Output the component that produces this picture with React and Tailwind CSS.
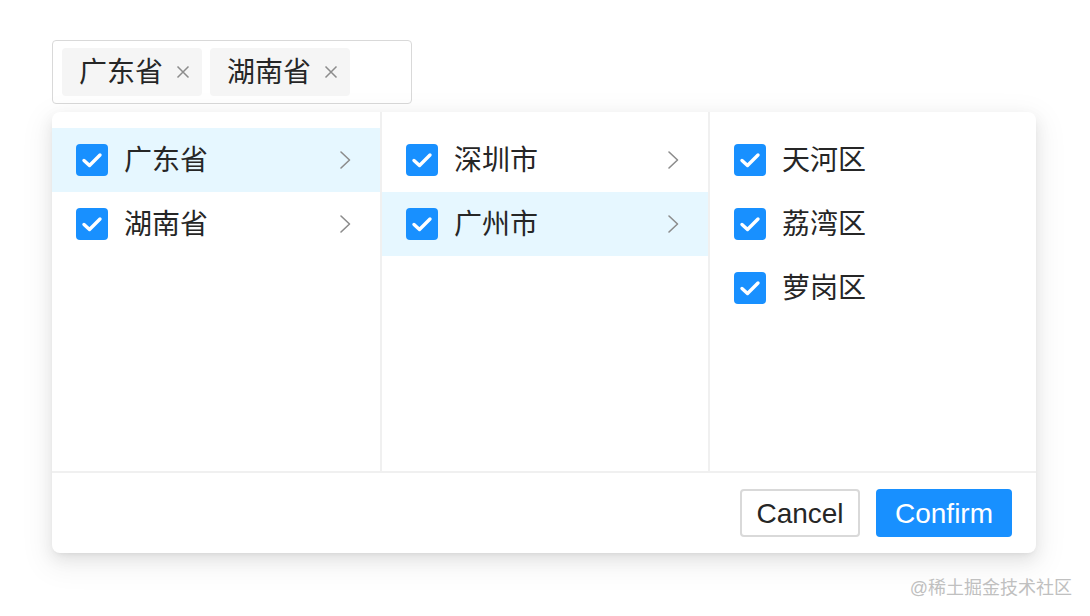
import React from "react"

const cjk = { fontFamily: '"Liberation Sans", "Noto Sans CJK SC", sans-serif' }

function Check() {
  return (
    <span className="flex h-8 w-8 shrink-0 items-center justify-center rounded-[4px] bg-[#1890ff]">
      <svg width="32" height="32" viewBox="0 0 32 32" fill="none">
        <path d="M8 16.5 L13.5 21.5 L24 11" stroke="white" strokeWidth="3.4" strokeLinecap="round" strokeLinejoin="round" />
      </svg>
    </span>
  )
}

function Chevron() {
  return (
    <svg width="14" height="20" viewBox="0 0 14 20" fill="none" className="shrink-0">
      <path d="M3 2 L11.5 10 L3 18" stroke="#8c8c8c" strokeWidth="1.6" strokeLinecap="round" strokeLinejoin="round" />
    </svg>
  )
}

function Row({ label, active, arrow }) {
  return (
    <div className={`flex h-16 items-center pl-6 pr-[28px] ${active ? "bg-[#e6f7ff]" : ""}`}>
      <Check />
      <span className="ml-4 flex-1 pt-[2px] text-[28px] leading-none text-[#262626]">{label}</span>
      {arrow && <Chevron />}
    </div>
  )
}

function Tag({ label }) {
  return (
    <span className="flex h-12 items-center rounded-[4px] bg-[#f5f5f5] pl-[17px] pr-3">
      <span className="pt-[2px] text-[28px] leading-none text-[#262626]">{label}</span>
      <svg width="14" height="14" viewBox="0 0 14 14" className="ml-[13px]">
        <path d="M1.5 1.5 L12.5 12.5 M12.5 1.5 L1.5 12.5" stroke="#8c8c8c" strokeWidth="1.5" />
      </svg>
    </span>
  )
}

export default function App() {
  const cols = [
    [
      { label: "广东省", active: true, arrow: true },
      { label: "湖南省", arrow: true },
    ],
    [
      { label: "深圳市", arrow: true },
      { label: "广州市", active: true, arrow: true },
    ],
    [{ label: "天河区" }, { label: "荔湾区" }, { label: "萝岗区" }],
  ]

  return (
    <div className="relative h-[616px] w-[1090px] bg-white" style={cjk}>
      <div className="pl-[52px] pt-10">
        <div className="flex h-16 w-[360px] items-center gap-2 rounded-[4px] border border-[#d9d9d9] px-[9px]">
          <Tag label="广东省" />
          <Tag label="湖南省" />
        </div>

        <div className="mt-[8px] w-[984px] rounded-lg bg-white shadow-[0_6px_16px_rgba(0,0,0,0.08),0_3px_6px_-4px_rgba(0,0,0,0.12),0_9px_28px_8px_rgba(0,0,0,0.05)]">
          <div className="grid h-[361px] grid-cols-3 border-b-2 border-[#f0f0f0]">
            {cols.map((rows, i) => (
              <div
                key={i}
                className={`pt-4 ${i > 0 ? "border-l-2 border-[#f0f0f0]" : ""}`}
              >
                {rows.map((r) => (
                  <Row key={r.label} {...r} />
                ))}
              </div>
            ))}
          </div>
          <div className="flex h-20 items-center justify-end gap-4 pr-6">
            <button className="h-12 w-[120px] rounded-[4px] border-2 border-[#d9d9d9] bg-white pt-[2px] text-[28px] leading-none text-[#262626]">
              Cancel
            </button>
            <button className="h-12 w-[136px] rounded-[4px] bg-[#1890ff] pt-[2px] text-[28px] leading-none text-white">
              Confirm
            </button>
          </div>
        </div>
      </div>

      <div className="absolute bottom-[19px] right-[18px] text-[18px] leading-none text-[#c0c0c0]">
        @稀土掘金技术社区
      </div>
    </div>
  )
}
